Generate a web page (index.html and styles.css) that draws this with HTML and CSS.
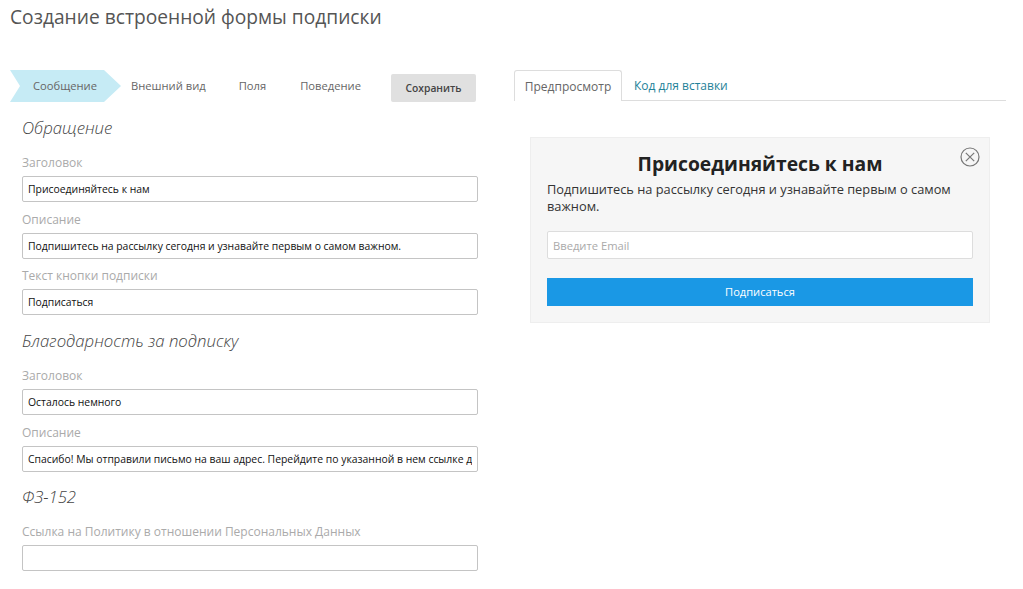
FILE: index.html
```html
<!DOCTYPE html>
<html lang="ru">
<head>
<meta charset="utf-8">
<title>Создание встроенной формы подписки</title>
<link rel="stylesheet" href="styles.css">
</head>
<body>
<h1 class="page-title">Создание встроенной формы подписки</h1>
<div class="columns">
  <div class="left">
    <div class="steps">
      <div class="step step-active">Сообщение</div>
      <div class="step step-2">Внешний вид</div>
      <div class="step step-3">Поля</div>
      <div class="step step-4">Поведение</div>
      <button class="save">Сохранить</button>
    </div>
    <div class="form">
      <h2 class="section first">Обращение</h2>
      <label class="label">Заголовок</label>
      <input class="field" value="Присоединяйтесь к нам">
      <label class="label">Описание</label>
      <input class="field" value="Подпишитесь на рассылку сегодня и узнавайте первым о самом важном.">
      <label class="label">Текст кнопки подписки</label>
      <input class="field" value="Подписаться">
      <h2 class="section">Благодарность за подписку</h2>
      <label class="label">Заголовок</label>
      <input class="field" value="Осталось немного">
      <label class="label">Описание</label>
      <input class="field" value="Спасибо! Мы отправили письмо на ваш адрес. Перейдите по указанной в нем ссылке для подтверждения подписки.">
      <h2 class="section compact">ФЗ-152</h2>
      <label class="label">Ссылка на Политику в отношении Персональных Данных</label>
      <input class="field" value="">
    </div>
  </div>
  <div class="right">
    <div class="tabs">
      <div class="tab tab-active">Предпросмотр</div>
      <div class="tab tab-link">Код для вставки</div>
    </div>
    <div class="preview">
      <svg class="close" viewBox="0 0 20 20" width="20" height="20" aria-hidden="true">
        <circle cx="10" cy="10" r="9" fill="none" stroke="#777" stroke-width="1.2"/>
        <path d="M5.8 5.8 14.2 14.2M14.2 5.8 5.8 14.2" fill="none" stroke="#777" stroke-width="1.2"/>
      </svg>
      <div class="preview-title">Присоединяйтесь к нам</div>
      <p class="preview-text">Подпишитесь на рассылку сегодня и узнавайте первым о самом важном.</p>
      <input class="email" placeholder="Введите Email">
      <button class="subscribe">Подписаться</button>
    </div>
  </div>
</div>
</body>
</html>
```
FILE: styles.css
```css
* { box-sizing: border-box; }
html, body { margin: 0; padding: 0; }
body {
  background: #fff;
  font-family: "Open Sans", "Liberation Sans", sans-serif;
  color: #555;
  overflow: hidden;
  height: 589px;
}
.page-title {
  margin: 0;
  padding: 4px 0 0 10px;
  height: 70px;
  font-size: 19.2px;
  line-height: 26px;
  font-weight: 400;
  color: #555;
}
.columns { display: flex; }
.left { width: 478px; margin-left: 10px; flex: none; }
.right { width: 492px; margin-left: 26px; flex: none; }
.steps { display: flex; align-items: center; height: 32px; font-size: 11.2px; color: #666; }
.step { line-height: 32px; white-space: nowrap; }
.step-active {
  flex: none;
  width: 111px;
  height: 32px;
  padding-left: 23px;
  background: #c6ebf5;
  clip-path: polygon(0 0, 94px 0, 100% 50%, 94px 100%, 0 100%, 10px 50%);
}
.step-2 { margin-left: 10px; }
.step-3 { margin-left: 33px; }
.step-4 { margin-left: 34px; }
.save {
  flex: none;
  margin-left: 30px;
  margin-top: 4px;
  width: 85px;
  height: 28px;
  border: 0;
  border-radius: 2px;
  background: #e0e0e0;
  color: #444;
  font: 600 10.3px "Open Sans", sans-serif;
}
.form { padding-left: 12px; display: flex; flex-direction: column; width: 468px; }
.section {
  margin: 6.5px 0 15px;
  font-size: 16.8px;
  line-height: 22px;
  font-weight: 300;
  font-style: italic;
  color: #444;
}
.section.first { margin-top: 15px; margin-bottom: 15px; }
.section.compact { margin-top: 5.5px; }
.label { font-size: 12px; line-height: 18px; color: #aaa; margin-bottom: 4px; }
.field {
  display: block;
  flex: none;
  width: 456px;
  height: 26px;
  margin-bottom: 8.5px;
  padding: 0 5px;
  border: 1px solid #c4c4c4;
  border-radius: 2px;
  background: #fff;
  color: #111;
  font: 400 10.4px "Open Sans", sans-serif;
  outline: 0;
}
.tabs { display: flex; height: 31px; border-bottom: 1px solid #ddd; font-size: 12px; }
.tab { height: 31px; line-height: 31px; white-space: nowrap; }
.tab-active {
  width: 108px;
  text-align: center;
  border: 1px solid #ddd;
  border-bottom: 0;
  border-radius: 3px 3px 0 0;
  background: #fff;
  color: #666;
}
.tab-link { margin-left: 12px; color: #1f8299; }
.preview {
  position: relative;
  width: 460px;
  height: 186px;
  margin: 36px 0 0 16px;
  padding: 14px 16px 0 16px;
  background: #f6f6f6;
  border: 1px solid #eee;
}
.close { position: absolute; top: 9px; right: 9px; }
.preview-title {
  font-size: 19.3px;
  line-height: 24px;
  font-weight: 700;
  color: #222;
  text-align: center;
  margin-bottom: 5px;
}
.preview-text { margin: 0; font-size: 12.8px; line-height: 17px; color: #333; }
.email {
  display: block;
  width: 426px;
  height: 28px;
  margin-top: 16px;
  padding: 0 5px;
  border: 1px solid #ddd;
  border-radius: 2px;
  background: #fff;
  font: 400 11.2px "Open Sans", sans-serif;
  outline: 0;
}
.email::placeholder { color: #aaa; opacity: 1; }
.subscribe {
  display: block;
  width: 426px;
  height: 28px;
  margin-top: 19px;
  padding: 0 0 2px;
  border: 0;
  background: #1a98e5;
  color: #fff;
  font: 400 11.1px "Open Sans", sans-serif;
}
```
